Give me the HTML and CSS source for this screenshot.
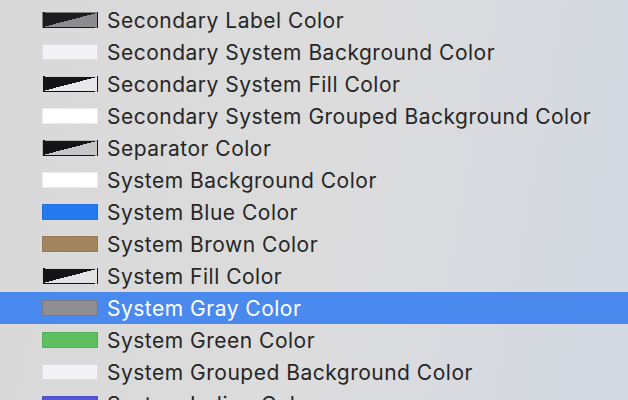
FILE: index.html
```html
<!DOCTYPE html>
<html lang="en">
<head>
  <meta charset="UTF-8" />
  <title>Colors</title>
  <link rel="stylesheet" href="styles.css">
</head>
<body>
  <ul class="menu">
    <li class="item"><span class="swatch split sec-label"></span>Secondary Label Color</li>
    <li class="item"><span class="swatch sec-bg"></span>Secondary System Background Color</li>
    <li class="item"><span class="swatch split sec-fill"></span>Secondary System Fill Color</li>
    <li class="item"><span class="swatch white"></span>Secondary System Grouped Background Color</li>
    <li class="item"><span class="swatch split separator"></span>Separator Color</li>
    <li class="item"><span class="swatch white"></span>System Background Color</li>
    <li class="item"><span class="swatch blue"></span>System Blue Color</li>
    <li class="item"><span class="swatch brown"></span>System Brown Color</li>
    <li class="item"><span class="swatch split fill"></span>System Fill Color</li>
    <li class="item selected"><span class="swatch gray"></span>System Gray Color</li>
    <li class="item"><span class="swatch green"></span>System Green Color</li>
    <li class="item"><span class="swatch sec-bg"></span>System Grouped Background Color</li>
    <li class="item"><span class="swatch indigo"></span>System Indigo Color</li>
  </ul>
</body>
</html>
```

FILE: styles.css
```css
* {
  box-sizing: border-box;
}

html, body {
  height: 100%;
}

body {
  margin: 0;
  overflow: hidden;
  font-family: Inter, "Liberation Sans", sans-serif;
  color: #262626;
  background: linear-gradient(100deg, #d9d9d9 0%, #dcdcdd 55%, #d3d8e2 100%);
}

.menu {
  list-style: none;
  margin: 0;
  padding: 4px 0 0;
}

.item {
  display: flex;
  align-items: center;
  gap: 9px;
  height: 32px;
  padding-left: 42px;
  font-size: 21px;
  letter-spacing: 0.5px;
  white-space: nowrap;
}

.item.selected {
  background: #4a8aee;
  color: #fff;
}

.swatch {
  flex: none;
  width: 56px;
  height: 16px;
  border: 1px solid rgba(0, 0, 0, 0.08);
}

.split.sec-label { background: linear-gradient(to bottom right, #1c1c1e 50%, #8c8c90 50%); }
.split.sec-fill { background: linear-gradient(to bottom right, #141416 50%, #e8e8ec 50%); }
.split.separator { background: linear-gradient(to bottom right, #141416 50%, #c6c6c8 50%); }
.split.fill { background: linear-gradient(to bottom right, #141416 50%, #e3e3e6 50%); }

.sec-bg { background: #f2f2f7; }
.white { background: #fff; }
.blue { background: #247af0; }
.brown { background: #a2845e; }
.gray { background: #8e8e93; border-color: rgba(0, 0, 0, 0.15); }
.green { background: #5cbf60; }
.indigo { background: #5856d6; }
```
